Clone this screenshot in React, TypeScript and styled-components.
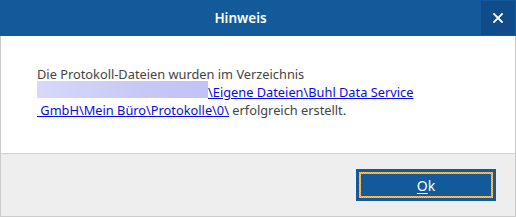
import React from "react";
import styled, { createGlobalStyle } from "styled-components";

const GlobalStyle = createGlobalStyle`
  html, body {
    margin: 0;
    padding: 0;
    background: #ffffff;
  }
  body {
    font-family: "Noto Sans", "Open Sans", sans-serif;
  }
`;

const App = () => {
  return (
    <Window>
      <GlobalStyle />
      <TitleBar>
        <Title>Hinweis</Title>
        <CloseButton aria-label="Schließen">
          <svg width="10" height="10" viewBox="0 0 10 10">
            <path
              d="M1 1 L9 9 M9 1 L1 9"
              stroke="#ffffff"
              strokeWidth="1.8"
              strokeLinecap="square"
            />
          </svg>
        </CloseButton>
      </TitleBar>
      <Body>
        <Message>
          <Line>Die Protokoll-Dateien wurden im Verzeichnis</Line>
          <Line>
            <Redacted />
            <PathLink href="#">\Eigene Dateien\Buhl Data Service</PathLink>
          </Line>
          <Line>
            <PathLink href="#"> GmbH\Mein Büro\Protokolle\0\</PathLink> erfolgreich
            erstellt.
          </Line>
        </Message>
      </Body>
      <Footer>
        <OkButton>
          <FocusRing />
          <ButtonLabel>
            <u>O</u>k
          </ButtonLabel>
        </OkButton>
      </Footer>
    </Window>
  );
};

export default App;

const Window = styled.div`
  width: 516px;
  height: 217px;
  box-sizing: border-box;
  display: flex;
  flex-direction: column;
  border: 1px solid #cccccc;
  border-top: 0;
`;

const TitleBar = styled.div`
  height: 36px;
  margin: 0 -1px;
  background: #135a9a;
  display: flex;
  align-items: center;
`;

const Title = styled.div`
  flex: 1;
  text-align: center;
  color: #ffffff;
  font-size: 13.5px;
  font-weight: 600;
  padding-bottom: 1px;
`;

const CloseButton = styled.div`
  width: 34px;
  height: 34px;
  margin: 1px 1px 1px 0;
  background: #0f4c89;
  display: flex;
  align-items: center;
  justify-content: center;
`;

const Body = styled.div`
  flex: 1;
  background: #ffffff;
  padding: 29px 20px 0 36px;
  border-bottom: 1px solid #d0d0d0;
`;

const Message = styled.div`
  color: #444444;
  font-size: 12.8px;
  line-height: 18px;
`;

const Line = styled.div`
  white-space: pre;
  height: 18px;
`;

const Redacted = styled.span`
  display: inline-block;
  width: 171px;
  height: 17px;
  vertical-align: top;
  margin-top: -2px;
  background: linear-gradient(90deg, #d8d8fa 0%, #c8c8f6 60%, #c2c2f4 100%);
`;

const PathLink = styled.a`
  color: #0a0ae6;
  text-decoration: underline;
`;

const Footer = styled.div`
  height: 62px;
  box-sizing: border-box;
  background: #eeeeee;
  display: flex;
  justify-content: flex-end;
  align-items: flex-start;
  padding: 15px 19px 0 0;
`;

const OkButton = styled.div`
  position: relative;
  width: 140px;
  height: 32px;
  background: #135a9a;
  display: flex;
  align-items: center;
  justify-content: center;
`;

const FocusRing = styled.span`
  position: absolute;
  inset: 3px;
  background: repeating-conic-gradient(#f5a33b 0 25%, #dcc9a4 0 50%) 0 0 / 2px
    2px;

  &::after {
    content: "";
    position: absolute;
    inset: 2px;
    background: #135a9a;
  }
`;

const ButtonLabel = styled.span`
  position: relative;
  color: #ffffff;
  font-size: 14px;
  padding-top: 1px;

  u {
    text-underline-offset: 2px;
  }
`;
